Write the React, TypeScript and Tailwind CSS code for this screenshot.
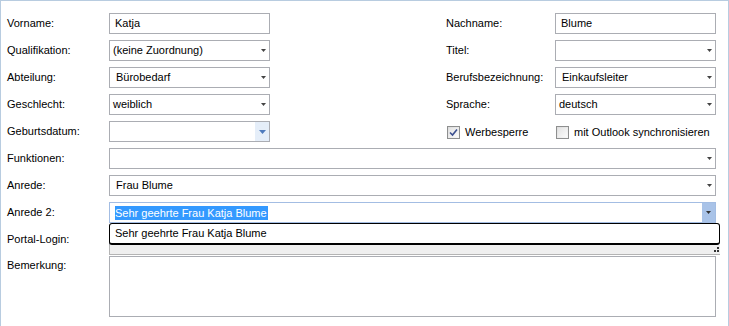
import React from 'react';

const Arrow: React.FC<{ color?: string }> = ({ color = '#444444' }) => (
  <svg width="5" height="3" viewBox="0 0 5 3" className="shrink-0">
    <polygon points="0,0 5,0 2.5,3" fill={color} />
  </svg>
);

const Label: React.FC<{ w: string; children: React.ReactNode }> = ({ w, children }) => (
  <div className={`${w} shrink-0 whitespace-nowrap leading-[13px]`}>{children}</div>
);

const TextBox: React.FC<{ w: string; value?: string }> = ({ w, value }) => (
  <div className={`${w} h-[21px] border border-[#abadb3] bg-white flex items-center pl-[5px] whitespace-nowrap`}>
    {value}
  </div>
);

const Combo: React.FC<{ w: string; value?: string; pad?: string }> = ({ w, value, pad = 'pl-[3px]' }) => (
  <div className={`${w} h-[21px] border border-[#abadb3] bg-white flex items-center justify-between ${pad} pr-[3px] whitespace-nowrap`}>
    <span>{value}</span>
    <Arrow />
  </div>
);

const Checkbox: React.FC<{ checked?: boolean }> = ({ checked }) => (
  <div className="w-[13px] h-[13px] border border-[#8e8f8f] bg-gradient-to-br from-[#dcdcdc] to-[#f8f8f8] p-[1px] shrink-0">
    <div className="w-full h-full bg-gradient-to-br from-[#e4e4e4] to-[#fafafa] flex items-center justify-center">
      {checked && (
        <svg width="9" height="9" viewBox="0 0 9 9">
          <path d="M1 4.5 L3.5 7 L8 1.5" stroke="#3b4f8f" strokeWidth="1.6" fill="none" />
        </svg>
      )}
    </div>
  </div>
);

const Row: React.FC<{ children: React.ReactNode }> = ({ children }) => (
  <div className="h-[21px] flex items-center">{children}</div>
);

export default function App() {
  return (
    <div className="w-[729px] h-[326px] bg-white border-l border-t border-r border-[#b8cce0] pt-[12px] pl-[6px] font-['Liberation_Sans',Arial,sans-serif] text-[11px] text-black overflow-hidden">
      <div className="flex flex-col gap-[6px]">
        <Row>
          <Label w="w-[102px]">Vorname:</Label>
          <TextBox w="w-[161px]" value="Katja" />
          <div className="w-[176px] shrink-0" />
          <Label w="w-[109px]">Nachname:</Label>
          <TextBox w="w-[161px]" value="Blume" />
        </Row>
        <Row>
          <Label w="w-[102px]">Qualifikation:</Label>
          <Combo w="w-[161px]" value="(keine Zuordnung)" />
          <div className="w-[176px] shrink-0" />
          <Label w="w-[109px]">Titel:</Label>
          <Combo w="w-[161px]" />
        </Row>
        <Row>
          <Label w="w-[102px]">Abteilung:</Label>
          <Combo w="w-[161px]" value="Bürobedarf" pad="pl-[6px]" />
          <div className="w-[176px] shrink-0" />
          <Label w="w-[109px]">Berufsbezeichnung:</Label>
          <Combo w="w-[161px]" value="Einkaufsleiter" pad="pl-[6px]" />
        </Row>
        <Row>
          <Label w="w-[102px]">Geschlecht:</Label>
          <Combo w="w-[161px]" value="weiblich" />
          <div className="w-[176px] shrink-0" />
          <Label w="w-[109px]">Sprache:</Label>
          <Combo w="w-[161px]" value="deutsch" />
        </Row>
        <Row>
          <Label w="w-[102px]">Geburtsdatum:</Label>
          <div className="w-[161px] h-[21px] border border-[#abadb3] bg-white flex justify-end">
            <div className="w-[14px] h-full bg-[#e5eef9] flex items-center justify-center">
              <svg width="7" height="4" viewBox="0 0 7 4">
                <polygon points="0,0 7,0 3.5,4" fill="#4f7bbd" />
              </svg>
            </div>
          </div>
          <div className="w-[176px] shrink-0" />
          <div className="w-[109px] shrink-0 flex items-center gap-[5px] pl-[1px] pt-[1px]">
            <Checkbox checked />
            <span>Werbesperre</span>
          </div>
          <div className="flex items-center gap-[5px] pl-[1px] pt-[1px] whitespace-nowrap">
            <Checkbox />
            <span>mit Outlook synchronisieren</span>
          </div>
        </Row>
        <Row>
          <Label w="w-[102px]">Funktionen:</Label>
          <Combo w="w-[607px]" />
        </Row>
        <Row>
          <Label w="w-[102px]">Anrede:</Label>
          <Combo w="w-[607px]" value="Frau Blume" pad="pl-[6px]" />
        </Row>
        <Row>
          <Label w="w-[102px]">Anrede 2:</Label>
          <div className="relative w-[607px] h-[21px]">
            <div className="h-full border border-[#a3bde3] bg-white flex items-center justify-between pl-[5px]">
              <span className="bg-[#3399ff] text-white leading-[14px] pr-[1px]">Sehr geehrte Frau Katja Blume</span>
              <div className="w-[13px] h-full bg-[#a9c3e8] flex items-center justify-center">
                <Arrow color="#333333" />
              </div>
            </div>
            <div className="absolute top-[21px] left-0 w-[611px] z-10 flex flex-col">
              <div className="h-[22px] border border-black border-b-2 rounded-[3px] bg-white flex items-center pl-[5px]">
                Sehr geehrte Frau Katja Blume
              </div>
              <div className="h-[10px] bg-[#efefef] border-l border-b border-[#b4b4b4] flex justify-end items-end pr-[1px] pb-[1px]">
                <svg width="6" height="6" viewBox="0 0 6 6">
                  <rect x="4" y="0" width="2" height="2" fill="#333" />
                  <rect x="1" y="3" width="2" height="2" fill="#333" />
                  <rect x="4" y="3" width="2" height="2" fill="#333" />
                </svg>
              </div>
            </div>
          </div>
        </Row>
        <Row>
          <Label w="w-[102px]">Portal-Login:</Label>
          <TextBox w="w-[607px]" />
        </Row>
        <div className="flex items-start">
          <div className="w-[102px] shrink-0 pt-[3px] leading-[13px]">Bemerkung:</div>
          <div className="w-[607px] h-[61px] border border-[#abadb3] bg-white" />
        </div>
      </div>
    </div>
  );
}
